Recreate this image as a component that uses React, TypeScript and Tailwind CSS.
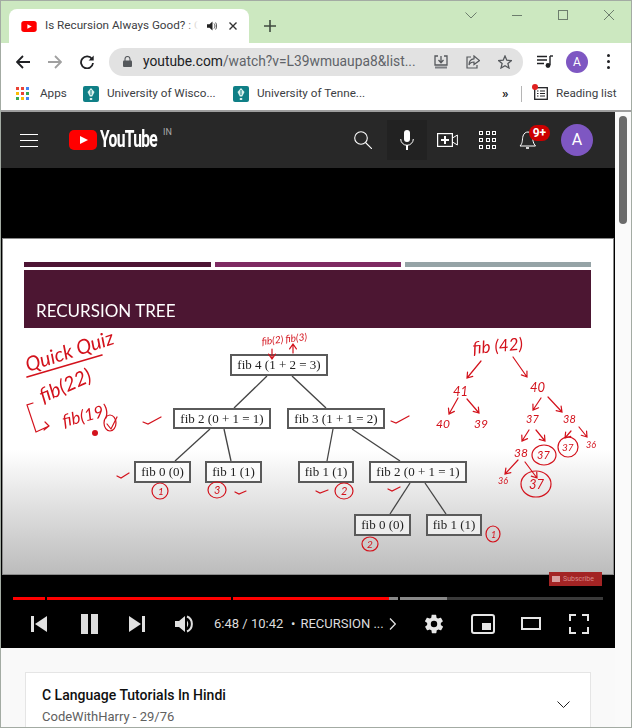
const treeNodes = [
  { label: 'fib 4 (1 + 2 = 3)', cls: 'left-[227px] top-[115px] w-[98px] h-[22px]' },
  { label: 'fib 2 (0 + 1 = 1)', cls: 'left-[170px] top-[169px] w-[98px] h-[21px]' },
  { label: 'fib 3 (1 + 1 = 2)', cls: 'left-[284px] top-[169px] w-[98px] h-[21px]' },
  { label: 'fib 0 (0)', cls: 'left-[131px] top-[222px] w-[57px] h-[22px]' },
  { label: 'fib 1 (1)', cls: 'left-[202px] top-[222px] w-[57px] h-[22px]' },
  { label: 'fib 1 (1)', cls: 'left-[295px] top-[222px] w-[56px] h-[22px]' },
  { label: 'fib 2 (0 + 1 = 1)', cls: 'left-[366px] top-[222px] w-[98px] h-[22px]' },
  { label: 'fib 0 (0)', cls: 'left-[351px] top-[275px] w-[57px] h-[22px]' },
  { label: 'fib 1 (1)', cls: 'left-[423px] top-[275px] w-[56px] h-[22px]' },
];

const treeEdges = [
  [267, 376, 234, 408],
  [292, 376, 326, 408],
  [210, 429, 175, 461],
  [224, 429, 231, 461],
  [333, 429, 327, 461],
  [352, 429, 400, 461],
  [410, 483, 390, 514],
  [425, 483, 446, 514],
];

// arrows in the hand drawn tree: start x/y, end x/y
const inkArrows = [
  [481, 361, 467, 378],
  [513, 357, 527, 377],
  [458, 398, 449, 414],
  [467, 399, 479, 413],
  [541, 398, 533, 410],
  [548, 397, 562, 412],
  [529, 430, 522, 441],
  [536, 430, 545, 441],
  [571, 431, 565, 438],
  [579, 427, 587, 437],
  [518, 460, 505, 474],
  [525, 462, 537, 478],
  [272, 349, 272, 359],
  [293, 353, 293, 344],
];

const inkChecks = [
  'M143 422 l5 2 l13 -7',
  'M391 421 l5 2 l13 -7',
  'M117 476 l4 2 l8 -5',
  'M235 492 l4 2 l7 -3',
  'M316 491 l4 2 l8 -3',
  'M388 489 l4 2 l8 -4',
  'M107 424 l4 5 l6 -12',
];

const inkRings = [
  [160, 491, 8, 8],
  [217, 490, 9, 8],
  [344, 491, 9, 8],
  [370, 544, 8, 7],
  [493, 534, 7, 8],
  [544, 455, 12, 10],
  [568, 447, 10, 10],
  [536, 484, 15, 13],
  [110, 423, 6, 8],
];

const inkText = [
  { t: 'Quick Quiz', x: 28, y: 372, size: 20, rot: -18 },
  { t: 'fib(22)', x: 43, y: 403, size: 20, rot: -24 },
  { t: 'fib(19)', x: 64, y: 427, size: 17, rot: -14 },
  { t: 'fib(2) fib(3)', x: 262, y: 345, size: 10, rot: -6 },
  { t: 'fib (42)', x: 473, y: 354, size: 17, rot: -5 },
  { t: '41', x: 453, y: 396, size: 13, rot: 0 },
  { t: '40', x: 530, y: 392, size: 13, rot: 0 },
  { t: '40', x: 436, y: 428, size: 12, rot: 0 },
  { t: '39', x: 474, y: 428, size: 12, rot: 0 },
  { t: '37', x: 526, y: 423, size: 11, rot: 0 },
  { t: '38', x: 563, y: 423, size: 11, rot: 0 },
  { t: '38', x: 514, y: 457, size: 12, rot: 0 },
  { t: '37', x: 537, y: 459, size: 11, rot: 0 },
  { t: '37', x: 562, y: 451, size: 10, rot: 0 },
  { t: '36', x: 586, y: 448, size: 9, rot: 0 },
  { t: '36', x: 498, y: 484, size: 9, rot: 0 },
  { t: '37', x: 529, y: 489, size: 13, rot: 0 },
  { t: '1', x: 158, y: 495, size: 10, rot: 0 },
  { t: '3', x: 214, y: 494, size: 11, rot: 0 },
  { t: '2', x: 341, y: 495, size: 11, rot: 0 },
  { t: '2', x: 367, y: 548, size: 10, rot: 0 },
  { t: '1', x: 491, y: 538, size: 9, rot: 0 },
];

function YoutubeBadge({ className }: { className: string }) {
  return (
    <svg viewBox="0 0 28 20" className={className}>
      <rect width="28" height="20" rx="5" fill="#ff0000" />
      <path d="M11 6 L19 10 L11 14 Z" fill="#fff" />
    </svg>
  );
}

function TealMark({ className }: { className: string }) {
  return (
    <svg viewBox="0 0 16 16" className={className}>
      <rect width="16" height="16" rx="2" fill="#0f7f86" />
      <path d="M8 2 L11.5 6 L9.2 10.5 H6.8 L4.5 6 Z M6.8 12 H9.2 V14 H6.8 Z" fill="#d9f2ee" />
      <path d="M8 4 V9" stroke="#0f7f86" strokeWidth="1" />
    </svg>
  );
}

function TabStrip() {
  return (
    <div className="flex items-end h-[42px] bg-[#cce8c0]">
      <div className="flex items-center ml-[8px] w-[240px] h-[34px] bg-white rounded-t-lg">
        <YoutubeBadge className="ml-[12px] w-[16px] h-[11px] shrink-0" />
        <div className="relative ml-[8px] w-[153px] overflow-hidden whitespace-nowrap text-[11.7px] text-[#3c4043] font-['Roboto',sans-serif]">
          Is Recursion Always Good? : C
          <div className="absolute right-0 top-0 bottom-0 w-[14px] bg-linear-to-r from-transparent to-white" />
        </div>
        <svg viewBox="0 0 10 10" className="ml-[9px] w-[10px] h-[10px] shrink-0">
          <path d="M0 3.2 H2.5 L5.5 0.5 V9.5 L2.5 6.8 H0 Z" fill="#222" />
          <path d="M7 2.5 C8.3 4 8.3 6 7 7.5 M8.6 1.5 C10 3.5 10 6.5 8.6 8.5" stroke="#555" fill="none" />
        </svg>
        <svg viewBox="0 0 8 8" className="ml-[12px] w-[8px] h-[8px] shrink-0">
          <path d="M0.5 0.5 L7.5 7.5 M7.5 0.5 L0.5 7.5" stroke="#333" strokeWidth="1.4" />
        </svg>
      </div>
      <svg viewBox="0 0 12 12" className="ml-[15px] mb-[11px] w-[12px] h-[12px] shrink-0">
        <path d="M6 0 V12 M0 6 H12" stroke="#3f4a3f" strokeWidth="1.6" />
      </svg>
      <div className="flex self-start mt-[9px] ml-auto mr-[17px] text-[#6d7d6d]">
        <svg viewBox="0 0 12 7" className="mt-[2px] w-[12px] h-[7px]">
          <path d="M0.5 0.5 L6 6 L11.500 0.5" stroke="currentColor" fill="none" />
        </svg>
        <svg viewBox="0 0 10 10" className="ml-[35px] w-[10px] h-[10px]">
          <path d="M0 5.5 H10" stroke="currentColor" />
        </svg>
        <svg viewBox="0 0 10 10" className="ml-[36px] w-[10px] h-[10px]">
          <rect x="0.5" y="0.5" width="9" height="9" stroke="currentColor" fill="none" />
        </svg>
        <svg viewBox="0 0 10 10" className="ml-[36px] w-[10px] h-[10px]">
          <path d="M0 0 L10 10 M10 0 L0 10" stroke="currentColor" />
        </svg>
      </div>
    </div>
  );
}

function Toolbar() {
  return (
    <div className="flex items-center h-[37px] bg-white">
      <svg viewBox="0 0 14 14" className="ml-[15px] w-[14px] h-[14px] shrink-0">
        <path d="M14 7 H1.5 M7 1 L1 7 L7 13" stroke="#202124" strokeWidth="1.8" fill="none" />
      </svg>
      <svg viewBox="0 0 14 14" className="ml-[18px] w-[14px] h-[14px] shrink-0">
        <path d="M0 7 H12.5 M7 1 L13 7 L7 13" stroke="#a0a0a0" strokeWidth="1.8" fill="none" />
      </svg>
      <svg viewBox="0 0 14 14" className="ml-[18px] w-[14px] h-[14px] shrink-0">
        <path d="M12 4 A6 6 0 1 0 13 8" stroke="#202124" strokeWidth="1.8" fill="none" />
        <path d="M13.7 0.5 V5.6 H8.6 Z" fill="#202124" />
      </svg>
      <div className="flex items-center ml-[15px] w-[414px] h-[28px] rounded-full bg-[#e2e2e2]">
        <svg viewBox="0 0 9 11" className="ml-[14px] w-[9px] h-[11px] shrink-0">
          <path d="M2 5 V3 A2.5 2.5 0 0 1 7 3 V5" stroke="#55585c" strokeWidth="1.1" fill="none" />
          <rect y="4.5" width="9" height="6.5" rx="1" fill="#55585c" />
        </svg>
        <span className="ml-[11px] w-[277px] whitespace-nowrap text-[13.8px] text-[#202124] font-['Roboto',sans-serif]">
          youtube.com<span className="text-[#5f6368]">/watch?v=L39wmuaupa8&amp;list...</span>
        </span>
        <svg viewBox="0 0 14 14" className="ml-[14px] w-[14px] h-[14px] shrink-0">
          <path d="M4 1 H1 V10 H13 V1 H10 M7 1 V7.5 M4.5 5 L7 7.8 L9.5 5" stroke="#55585c" strokeWidth="1.3" fill="none" />
          <rect x="1" y="11.5" width="12" height="2" fill="#7c7f83" />
        </svg>
        <svg viewBox="0 0 14 14" className="ml-[18px] w-[14px] h-[14px] shrink-0">
          <path d="M8 1 L13.5 5.5 L8 9.5 V7 C5 7 3.8 8 3 10 C3 6 5 4 8 3.8 Z M5 2 H1 V13 H11 V10" stroke="#55585c" strokeWidth="1.2" fill="none" />
        </svg>
        <svg viewBox="0 0 14 14" className="ml-[18px] w-[14px] h-[14px] shrink-0">
          <path d="M7 1 L8.8 5.2 L13.4 5.6 L9.9 8.6 L11 13 L7 10.7 L3 13 L4.1 8.6 L0.6 5.6 L5.2 5.2 Z" stroke="#55585c" strokeWidth="1.3" fill="none" />
        </svg>
      </div>
      <svg viewBox="0 0 16 13" className="ml-[14px] w-[16px] h-[13px] shrink-0">
        <path d="M0 1.5 H10 M0 5 H10 M0 8.5 H7" stroke="#202124" strokeWidth="1.4" />
        <path d="M13 1 V10" stroke="#202124" strokeWidth="1.4" />
        <path d="M13 1 H16" stroke="#202124" strokeWidth="1.4" />
        <circle cx="11" cy="10.5" r="2.4" fill="#202124" />
      </svg>
      <div className="flex items-center justify-center ml-[13px] w-[22px] h-[22px] rounded-full bg-[#7e57c2] text-white text-[12px] font-['Roboto',sans-serif] shrink-0">
        A
      </div>
      <div className="flex flex-col gap-[3px] ml-[19px] shrink-0">
        <span className="w-[3px] h-[3px] rounded-full bg-[#202124]" />
        <span className="w-[3px] h-[3px] rounded-full bg-[#202124]" />
        <span className="w-[3px] h-[3px] rounded-full bg-[#202124]" />
      </div>
    </div>
  );
}

const appDots = [
  'bg-[#ea4335]',
  'bg-[#ea4335]',
  'bg-[#4285f4]',
  'bg-[#fbbc05]',
  'bg-[#ea4335]',
  'bg-[#34a853]',
  'bg-[#34a853]',
  'bg-[#fbbc05]',
  'bg-[#4285f4]',
];

function BookmarkBar() {
  return (
    <div className="flex items-center h-[32px] pb-[3px] bg-white border-b-2 border-[#9e9e9e] text-[11.7px] text-[#3c4043] font-['Roboto',sans-serif] whitespace-nowrap">
      <div className="grid grid-cols-3 gap-[2px] ml-[15px] w-[13px] shrink-0">
        {appDots.map((c, i) => (
          <span key={i} className={`w-[3px] h-[3px] ${c}`} />
        ))}
      </div>
      <span className="ml-[11px] w-[32px]">Apps</span>
      <TealMark className="ml-[11px] w-[16px] h-[16px] shrink-0" />
      <span className="ml-[8px] w-[110px]">University of Wisco...</span>
      <TealMark className="ml-[16px] w-[16px] h-[16px] shrink-0" />
      <span className="ml-[8px] w-[110px]">University of Tenne...</span>
      <span className="ml-[135px] w-[10px] text-[13px] font-bold text-[#202124]">»</span>
      <span className="ml-[9px] w-[1px] h-[16px] bg-[#b5b5b5]" />
      <div className="relative ml-[12px] w-[14px] h-[13px] shrink-0">
        <svg viewBox="0 0 14 13" className="w-[14px] h-[13px]">
          <rect x="0.7" y="0.7" width="12.6" height="11.6" fill="none" stroke="#202124" strokeWidth="1.3" />
          <path d="M3 4 H4.5 M6 4 H11 M3 6.5 H4.5 M6 6.5 H11 M3 9 H4.5 M6 9 H11" stroke="#202124" />
        </svg>
        <span className="absolute -left-[2px] -top-[3px] w-[6px] h-[6px] rounded-full bg-[#e02020]" />
      </div>
      <span className="ml-[8px]">Reading list</span>
    </div>
  );
}

function SiteHeader() {
  return (
    <div className="flex items-center h-[56px] bg-[#282828] text-white">
      <div className="flex flex-col gap-[5px] ml-[19px] w-[18px] shrink-0">
        <span className="h-[1px] bg-white" />
        <span className="h-[1px] bg-white" />
        <span className="h-[1px] bg-white" />
      </div>
      <YoutubeBadge className="ml-[31px] w-[28px] h-[20px] shrink-0" />
      <div className="ml-[3px] w-[60px] h-[24px] text-[23px] leading-[24px] font-bold tracking-[-1px] scale-x-[0.68] origin-left whitespace-nowrap font-['Roboto',sans-serif]">
        YouTube
      </div>
      <span className="self-start mt-[15px] ml-[3px] text-[9px] leading-[10px] text-[#aaaaaa] font-['Roboto',sans-serif]">IN</span>
      <svg viewBox="0 0 18 18" className="ml-[182px] w-[18px] h-[18px] shrink-0">
        <circle cx="7" cy="7" r="6.3" fill="none" stroke="#fff" strokeWidth="1.1" />
        <path d="M11.5 11.5 L18 18" stroke="#fff" strokeWidth="1.1" />
      </svg>
      <div className="flex items-center justify-center ml-[15px] w-[40px] h-[40px] bg-[#222222] shrink-0">
        <svg viewBox="0 0 14 20" className="w-[14px] h-[20px]">
          <rect x="4" y="0" width="6" height="12" rx="3" fill="#fff" />
          <path d="M0.7 9 A6.3 6.3 0 0 0 13.3 9" fill="none" stroke="#fff" />
          <path d="M7 15 V20" stroke="#fff" strokeWidth="2" />
        </svg>
      </div>
      <svg viewBox="0 0 21 14" className="ml-[10px] w-[21px] h-[14px] shrink-0">
        <rect x="0.6" y="0.6" width="14.8" height="12.8" fill="none" stroke="#fff" strokeWidth="1.2" />
        <path d="M15.5 5 L20.4 2 V12 L15.5 9" fill="none" stroke="#fff" />
        <path d="M8 3 V11 M4 7 H12" stroke="#fff" strokeWidth="2" />
      </svg>
      <div className="grid grid-cols-3 gap-[3px] ml-[21px] w-[17px] shrink-0">
        {Array.from({ length: 9 }, (_, i) => (
          <span key={i} className="w-[4px] h-[4px] border border-white" />
        ))}
      </div>
      <div className="relative ml-[23px] w-[17px] h-[20px] shrink-0">
        <svg viewBox="0 0 17 20" className="w-[17px] h-[20px]">
          <path d="M1 16 C4 13 3 10 4 6 C5 3 7 2 9 2 C12 2 13 4 13.5 7 C14 11 14 13 16.5 16 Z" fill="none" stroke="#fff" />
          <path d="M7 18 H10" stroke="#fff" strokeWidth="1.6" />
        </svg>
        <span className="absolute left-[10px] -top-[5px] flex items-center justify-center w-[21px] h-[16px] rounded-full bg-[#cc0000] text-[12px] font-bold text-white font-['Roboto',sans-serif]">
          9+
        </span>
      </div>
      <div className="flex items-center justify-center ml-[25px] w-[32px] h-[32px] rounded-full bg-[#7e57c2] text-[16px] text-white font-['Roboto',sans-serif] shrink-0">
        A
      </div>
    </div>
  );
}

function Slide() {
  return (
    <div className="relative ml-[1px] w-[610px] h-[335px] overflow-hidden border border-[#8a8a8a] bg-linear-to-b from-white from-[63%] to-[#bcbcbc] [box-sizing:content-box] -mt-px">
      <div className="pt-[23px] pl-[21px] blur-[0.4px]">
        <div className="flex gap-[4px] w-[567px]">
          <div className="w-[187px] h-[5px] bg-[#4d1434]" />
          <div className="w-[186px] h-[5px] bg-[#7e2a62]" />
          <div className="w-[186px] h-[5px] bg-[#95a3a6]" />
        </div>
        <div className="flex items-end mt-[3px] w-[567px] h-[58px] pb-[5px] pl-[12px] bg-[#4c1632] text-[17px] text-white font-['Lato',sans-serif]">
          RECURSION TREE
        </div>
      </div>

      <svg viewBox="3 239 611 335" className="absolute left-0 top-0 w-[611px] h-[335px] blur-[0.4px]">
        {treeEdges.map(([x1, y1, x2, y2], i) => (
          <line key={i} x1={x1} y1={y1} x2={x2} y2={y2} stroke="#444" strokeWidth="1.3" />
        ))}
      </svg>

      {treeNodes.map((node, i) => (
        <div
          key={i}
          className={`absolute flex items-center justify-center border-2 border-[#5a5a5a] bg-white/60 text-[13px] text-[#222] whitespace-nowrap blur-[0.4px] font-['Liberation_Serif',serif] ${node.cls}`}
        >
          {node.label}
        </div>
      ))}

      <svg viewBox="3 239 611 335" className="absolute left-0 top-0 w-[611px] h-[335px] blur-[0.3px]">
        <g className="font-['Lato',sans-serif] italic fill-[#d3121c]">
          {inkText.map((ink, i) => (
            <text key={i} x={ink.x} y={ink.y} fontSize={ink.size} transform={`rotate(${ink.rot} ${ink.x} ${ink.y})`}>
              {ink.t}
            </text>
          ))}
        </g>
        <g fill="none" stroke="#d3121c" strokeWidth="1.2" strokeLinecap="round">
          <path d="M27 377 L102 355" strokeWidth="1.6" />
          <path d="M33 403 L27 405 L36 432 L49 426 M45 422 L49 426 L44 430" />
          {inkArrows.map(([x1, y1, x2, y2], i) => {
            const a = Math.atan2(y2 - y1, x2 - x1);
            const hx1 = x2 - 6 * Math.cos(a - 0.6);
            const hy1 = y2 - 6 * Math.sin(a - 0.6);
            const hx2 = x2 - 6 * Math.cos(a + 0.6);
            const hy2 = y2 - 6 * Math.sin(a + 0.6);
            return <path key={i} d={`M${x1} ${y1} L${x2} ${y2} M${hx1} ${hy1} L${x2} ${y2} L${hx2} ${hy2}`} />;
          })}
          {inkChecks.map((d, i) => (
            <path key={i} d={d} />
          ))}
          {inkRings.map(([cx, cy, rx, ry], i) => (
            <ellipse key={i} cx={cx} cy={cy} rx={rx} ry={ry} />
          ))}
        </g>
        <circle cx="95" cy="433" r="3" fill="#d3121c" />
      </svg>
    </div>
  );
}

function PlayerControls() {
  return (
    <div className="h-[73px] pt-[22px]">
      <div className="flex h-[3px] ml-[12px]">
        <div className="w-[32px] bg-[#ff0000]" />
        <div className="ml-[2px] w-[184px] bg-[#ff0000]" />
        <div className="ml-[2px] w-[156px] bg-[#ff0000]" />
        <div className="w-[9px] bg-[#888888]" />
        <div className="ml-[2px] w-[47px] bg-[#888888]" />
        <div className="w-[156px] bg-[#3a3a3a]" />
      </div>
      <div className="flex items-center h-[47px] text-[#dddddd] font-['Roboto',sans-serif] whitespace-nowrap">
        <svg viewBox="0 0 16 16" className="ml-[30px] w-[16px] h-[16px] shrink-0">
          <path d="M0 0 H3 V16 H0 Z M16 0 V16 L4 8 Z" fill="#e0e0e0" />
        </svg>
        <div className="flex gap-[3px] ml-[34px] shrink-0">
          <span className="w-[7px] h-[20px] bg-[#dddddd]" />
          <span className="w-[7px] h-[20px] bg-[#dddddd]" />
        </div>
        <svg viewBox="0 0 16 16" className="ml-[31px] w-[16px] h-[16px] shrink-0">
          <path d="M16 0 H13 V16 H16 Z M0 0 V16 L12 8 Z" fill="#e0e0e0" />
        </svg>
        <svg viewBox="0 0 18 18" className="ml-[30px] w-[18px] h-[18px] shrink-0">
          <path d="M0 6 H4 L10 1 V17 L4 12 H0 Z" fill="#e0e0e0" />
          <path d="M12 5.5 C13.7 7.5 13.7 10.5 12 12.5 V5.5 Z" fill="#e0e0e0" />
          <path d="M12 1.5 C18.5 4 18.5 14 12 16.5" stroke="#e0e0e0" strokeWidth="2" fill="none" />
        </svg>
        <span className="ml-[21px] w-[70px] text-[13px]">6:48 / 10:42</span>
        <span className="ml-[7px] text-[13px]">•</span>
        <span className="ml-[5px] w-[84px] text-[13px]">RECURSION ...</span>
        <svg viewBox="0 0 7 12" className="ml-[5px] w-[7px] h-[12px] shrink-0">
          <path d="M1 0.5 L6.3 6 L1 11.5" stroke="#e0e0e0" strokeWidth="1.3" fill="none" />
        </svg>
        <svg viewBox="0 0 24 24" className="ml-[27px] w-[22px] h-[22px] shrink-0">
          <path
            d="M19.4 13c.1-.3.1-.7.1-1s0-.7-.1-1l2.100-1.600c.2-.2.2-.4.1-.6l-2-3.500c-.1-.2-.4-.3-.6-.2l-2.500 1c-.5-.4-1.100-.7-1.700-1l-.4-2.600c0-.3-.2-.5-.5-.5h-4c-.3 0-.5.2-.5.4l-.4 2.700c-.6.2-1.200.6-1.700 1l-2.500-1c-.2-.1-.5 0-.6.2l-2 3.500c-.1.2-.1.5.1.6L4.600 11c0 .3-.1.7-.1 1s0 .7.1 1l-2.100 1.600c-.2.2-.2.4-.1.6l2 3.500c.1.2.4.3.6.2l2.500-1c.5.4 1.100.7 1.700 1l.4 2.600c0 .3.2.5.5.5h4c.3 0 .5-.2.5-.4l.4-2.700c.6-.3 1.200-.6 1.700-1l2.500 1c.2.1.5 0 .6-.2l2-3.500c.1-.2.1-.5-.1-.6zM12 15.500a3.500 3.500 0 1 1 0-7 3.500 3.500 0 0 1 0 7z"
            fill="#e6e6e6"
          />
        </svg>
        <svg viewBox="0 0 24 20" className="ml-[26px] w-[24px] h-[20px] shrink-0">
          <rect x="1" y="1" width="22" height="18" rx="2" fill="none" stroke="#e6e6e6" strokeWidth="2" />
          <rect x="11" y="9" width="9" height="7" fill="#e6e6e6" />
        </svg>
        <svg viewBox="0 0 20 13" className="ml-[26px] w-[20px] h-[13px] shrink-0">
          <rect x="1" y="1" width="18" height="11" fill="none" stroke="#e6e6e6" strokeWidth="2" />
        </svg>
        <svg viewBox="0 0 20 20" className="ml-[28px] w-[20px] h-[20px] shrink-0">
          <path d="M1 7 V1 H7 M13 1 H19 V7 M19 13 V19 H13 M7 19 H1 V13" stroke="#e6e6e6" strokeWidth="2" fill="none" />
        </svg>
      </div>
    </div>
  );
}

function PlaylistCard() {
  return (
    <div className="mt-[24px] ml-[24px] w-[566px] h-[60px] flex items-start bg-white border-x border-t border-[#e5e5e5] font-['Roboto',sans-serif]">
      <div className="ml-[16px] mt-[13px]">
        <div className="text-[14px] leading-[18px] font-medium text-[#0f0f0f]">C Language Tutorials In Hindi</div>
        <div className="mt-[4px] text-[13px] leading-[18px] text-[#606060]">CodeWithHarry - 29/76</div>
      </div>
      <svg viewBox="0 0 13 7" className="ml-auto mr-[20px] mt-[28px] w-[13px] h-[7px]">
        <path d="M0.5 0.5 L6.5 6.5 L12.500 0.5" stroke="#222" fill="none" />
      </svg>
    </div>
  );
}

export default function App() {
  return (
    <div className="w-[632px] h-[728px] overflow-hidden border border-[#a3aba3] bg-white">
      <TabStrip />
      <Toolbar />
      <BookmarkBar />
      <div className="flex">
        <div className="w-[614px] bg-[#f9f9f9]">
          <SiteHeader />
          <div className="relative bg-black">
            <div className="h-[71px]" />
            <Slide />
            <PlayerControls />
            <div className="absolute left-[548px] top-[404px] flex items-center w-[53px] h-[14px] bg-[#a32424] text-[7px] text-[#d88a8a] font-['Roboto',sans-serif]">
              <span className="ml-[3px] mr-[3px] w-[8px] h-[6px] bg-[#d8a0a0]" />
              Subscribe
            </div>
          </div>
          <PlaylistCard />
        </div>
        <div className="w-[16px] h-[616px] pt-[4px] pl-[4px] bg-[#fafafa]">
          <div className="w-[8px] h-[108px] rounded-full bg-[#6b6b6b]" />
        </div>
      </div>
    </div>
  );
}
